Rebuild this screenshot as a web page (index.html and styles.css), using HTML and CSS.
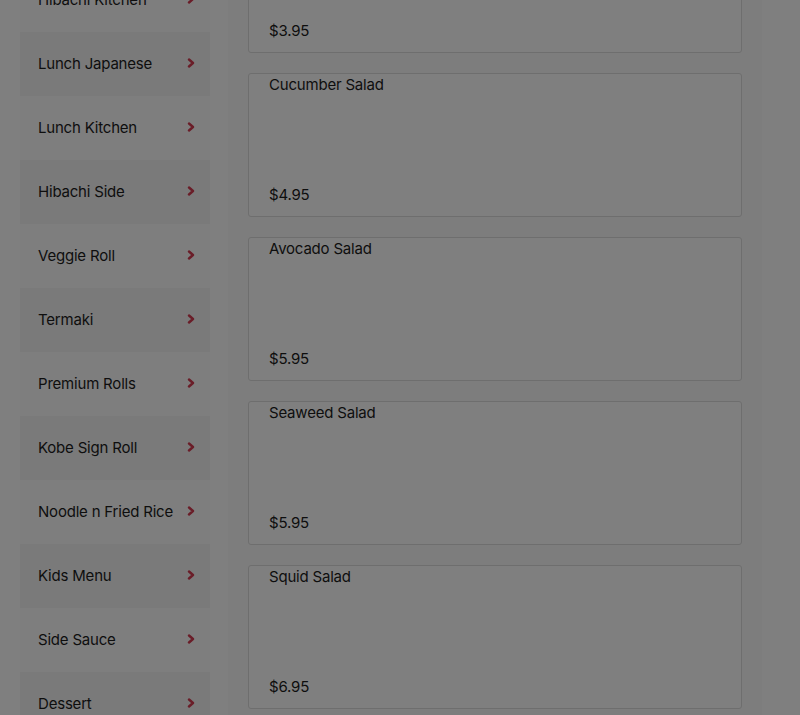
FILE: index.html
```html
<!DOCTYPE html>
<html>
<head>
<meta charset="utf-8">
<link rel="stylesheet" href="styles.css">
</head>
<body>
<div class="page">
  <aside class="sidebar">
    <ul class="cats">
      <li class="cat"><span>Hibachi Kitchen</span><svg class="chev" viewBox="0 0 10 10"><path d="M3 1.5 L7 5 L3 8.5"/></svg></li>
      <li class="cat alt"><span>Lunch Japanese</span><svg class="chev" viewBox="0 0 10 10"><path d="M3 1.5 L7 5 L3 8.5"/></svg></li>
      <li class="cat"><span>Lunch Kitchen</span><svg class="chev" viewBox="0 0 10 10"><path d="M3 1.5 L7 5 L3 8.5"/></svg></li>
      <li class="cat alt"><span>Hibachi Side</span><svg class="chev" viewBox="0 0 10 10"><path d="M3 1.5 L7 5 L3 8.5"/></svg></li>
      <li class="cat"><span>Veggie Roll</span><svg class="chev" viewBox="0 0 10 10"><path d="M3 1.5 L7 5 L3 8.5"/></svg></li>
      <li class="cat alt"><span>Termaki</span><svg class="chev" viewBox="0 0 10 10"><path d="M3 1.5 L7 5 L3 8.5"/></svg></li>
      <li class="cat"><span>Premium Rolls</span><svg class="chev" viewBox="0 0 10 10"><path d="M3 1.5 L7 5 L3 8.5"/></svg></li>
      <li class="cat alt"><span>Kobe Sign Roll</span><svg class="chev" viewBox="0 0 10 10"><path d="M3 1.5 L7 5 L3 8.5"/></svg></li>
      <li class="cat"><span>Noodle n Fried Rice</span><svg class="chev" viewBox="0 0 10 10"><path d="M3 1.5 L7 5 L3 8.5"/></svg></li>
      <li class="cat alt"><span>Kids Menu</span><svg class="chev" viewBox="0 0 10 10"><path d="M3 1.5 L7 5 L3 8.5"/></svg></li>
      <li class="cat"><span>Side Sauce</span><svg class="chev" viewBox="0 0 10 10"><path d="M3 1.5 L7 5 L3 8.5"/></svg></li>
      <li class="cat alt"><span>Dessert</span><svg class="chev" viewBox="0 0 10 10"><path d="M3 1.5 L7 5 L3 8.5"/></svg></li>
    </ul>
  </aside>
  <main class="content">
    <div class="card"><div class="name">House Salad</div><div class="price">$3.95</div></div>
    <div class="card"><div class="name">Cucumber Salad</div><div class="price">$4.95</div></div>
    <div class="card"><div class="name">Avocado Salad</div><div class="price">$5.95</div></div>
    <div class="card"><div class="name">Seaweed Salad</div><div class="price">$5.95</div></div>
    <div class="card"><div class="name">Squid Salad</div><div class="price">$6.95</div></div>
    <div class="card"><div class="name">Kani Salad</div><div class="price">$6.95</div></div>
  </main>
  <div class="right"></div>
</div>
<div class="overlay"></div>
</body>
</html>
```
FILE: styles.css
```css
html, body {
  margin: 0;
  padding: 0;
  background: #ffffff;
  overflow: hidden;
  height: 715px;
}
body {
  font-family: Inter, "Noto Sans", sans-serif;
  color: #1c1c1c;
  font-size: 15px;
  letter-spacing: -0.2px;
}
.page {
  display: flex;
  align-items: flex-start;
}
.sidebar {
  width: 228px;
  flex: none;
  background: #ffffff;
}
.cats {
  list-style: none;
  margin: -32px 0 0 0;
  padding: 0 18px 0 20px;
}
.cat {
  height: 64px;
  box-sizing: border-box;
  display: flex;
  align-items: center;
  justify-content: space-between;
  padding: 0 14px 2px 18px;
  background: #fdfdfd;
}
.cat.alt {
  background: #f4f4f4;
}
.chev {
  width: 10px;
  height: 10px;
  fill: none;
  stroke: #d43a50;
  stroke-width: 2.4;
  stroke-linecap: round;
  stroke-linejoin: round;
}
.content {
  width: 534px;
  flex: none;
  background: #fbfbfb;
  box-sizing: border-box;
  padding: 0 20px;
  margin-top: -91px;
  display: flex;
  flex-direction: column;
  gap: 20px;
  min-height: 830px;
}
.card {
  height: 144px;
  box-sizing: border-box;
  border: 1px solid #dcdcdc;
  border-radius: 3px;
  background: #ffffff;
  padding: 1px 20px 11px;
  display: flex;
  flex-direction: column;
  justify-content: space-between;
  line-height: 20px;
}
.right {
  flex: 1;
}
.overlay {
  position: fixed;
  inset: 0;
  background: rgba(0, 0, 0, 0.5);
}
```
